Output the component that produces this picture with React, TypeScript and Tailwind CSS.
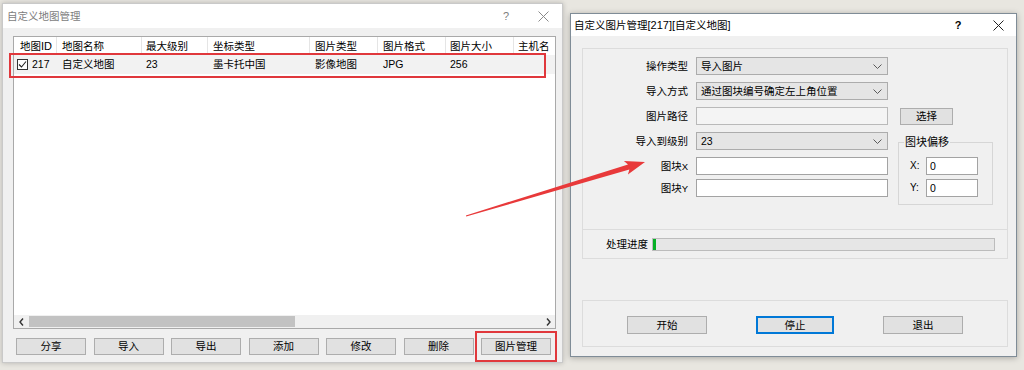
import React from "react";

function CloseX({ color }: { color: string }) {
  return (
    <svg width="11" height="11" viewBox="0 0 11 11">
      <line x1="0.5" y1="0.5" x2="10.5" y2="10.5" stroke={color} strokeWidth="1" />
      <line x1="10.5" y1="0.5" x2="0.5" y2="10.5" stroke={color} strokeWidth="1" />
    </svg>
  );
}

function Chevron() {
  return (
    <svg width="9" height="5" viewBox="0 0 9 5">
      <polyline points="0.5,0.5 4.5,4.5 8.5,0.5" fill="none" stroke="#5a5a5a" strokeWidth="1" />
    </svg>
  );
}

function Combo({ value }: { value: string }) {
  return (
    <div className="ml-[8px] w-[192px] h-[18px] bg-[#e5e5e5] border border-[#acacac] flex items-center pl-[4px] pr-[5px]">
      <span className="flex-1">{value}</span>
      <Chevron />
    </div>
  );
}

function Btn({ children, w, blue }: { children: React.ReactNode; w: string; blue?: boolean }) {
  return (
    <div
      className={`${w} h-[18px] bg-[#e1e1e1] border flex items-center justify-center ${
        blue ? "border-[#0078d7] shadow-[inset_0_0_0_1px_#0078d7]" : "border-[#adadad]"
      }`}
    >
      {children}
    </div>
  );
}

const cols = [
  { w: "w-[43px]", h: "地图ID", d: "217", pl: "pl-[6px]" },
  { w: "w-[85px]", h: "地图名称", d: "自定义地图", pl: "pl-[5px]" },
  { w: "w-[66px]", h: "最大级别", d: "23", pl: "pl-[4px]" },
  { w: "w-[102px]", h: "坐标类型", d: "墨卡托中国", pl: "pl-[5px]" },
  { w: "w-[68px]", h: "图片类型", d: "影像地图", pl: "pl-[5px]" },
  { w: "w-[68px]", h: "图片格式", d: "JPG", pl: "pl-[5px]" },
  { w: "w-[68px]", h: "图片大小", d: "256", pl: "pl-[4px]" },
  { w: "w-[60px]", h: "主机名", d: "", pl: "pl-[4px]" },
];

function LeftDialog() {
  return (
    <div className="ml-[2px] mt-[3px] w-[561px] h-[360px] shrink-0 flex flex-col bg-[#f0f0f0] border border-[#c9c9c9] shadow-[0_0_5px_rgba(0,0,0,0.22)]">
      <div className="h-[24px] bg-white flex items-center pl-[4px] text-[#7d7d7d]">
        <span className="text-[10.5px]">自定义地图管理</span>
        <span className="ml-auto w-[20px] text-center text-[11px] font-['Liberation_Sans',sans-serif]">?</span>
        <span className="ml-[17px] mr-[9px] w-[20px] flex justify-center">
          <CloseX color="#8a8a8a" />
        </span>
      </div>
      <div className="mt-[8px] ml-[10px] w-[543px] h-[293px] bg-white border border-[#a9a9a9] flex flex-col overflow-hidden">
        <div className="h-[18px] flex shrink-0">
          {cols.map((c, i) => (
            <div
              key={i}
              className={`${c.w} ${c.pl} shrink-0 flex items-center border-r border-[#e5e5e5] whitespace-nowrap`}
            >
              {c.h === "地图ID" ? (
                <span>
                  地图<span className="font-['Liberation_Sans',sans-serif] text-[11px]">ID</span>
                </span>
              ) : (
                c.h
              )}
            </div>
          ))}
        </div>
        <div className="h-[19px] flex shrink-0 bg-[#f2f2f2]">
          {cols.map((c, i) => (
            <div key={i} className={`${c.w} shrink-0 flex items-center whitespace-nowrap ${i === 0 ? "pl-[3px]" : c.pl}`}>
              {i === 0 ? (
                <>
                  <span className="w-[11px] h-[11px] border border-[#333] bg-white flex items-center justify-center">
                    <svg width="9" height="9" viewBox="0 0 9 9">
                      <polyline points="1,4.5 3.5,7 8,1.5" fill="none" stroke="#222" strokeWidth="1.1" />
                    </svg>
                  </span>
                  <span className="ml-[4px] font-['Liberation_Sans',sans-serif] text-[10.5px]">217</span>
                </>
              ) : /[A-Za-z0-9]/.test(c.d) ? (
                <span className="font-['Liberation_Sans',sans-serif] text-[10.5px]">{c.d}</span>
              ) : (
                c.d
              )}
            </div>
          ))}
        </div>
        <div className="flex-1" />
        <div className="h-[13px] shrink-0 flex items-center bg-[#f0f0f0]">
          <span className="w-[14px] flex justify-center">
            <svg width="5" height="8" viewBox="0 0 5 8">
              <polyline points="4,0.5 1,4 4,7.5" fill="none" stroke="#333" strokeWidth="1.4" />
            </svg>
          </span>
          <span className="ml-[1px] w-[266px] h-[11px] bg-[#c2c2c2]" />
          <span className="flex-1" />
          <span className="w-[14px] flex justify-center">
            <svg width="5" height="8" viewBox="0 0 5 8">
              <polyline points="1,0.5 4,4 1,7.5" fill="none" stroke="#333" strokeWidth="1.4" />
            </svg>
          </span>
        </div>
      </div>
      <div className="mt-[9px] ml-[13px] flex gap-[7.5px]">
        {["分享", "导入", "导出", "添加", "修改", "删除", "图片管理"].map((t) => (
          <div key={t} className="w-[70px] h-[17px] bg-[#e1e1e1] border border-[#adadad] flex items-center justify-center">
            {t}
          </div>
        ))}
      </div>
    </div>
  );
}

function Row({ label, children, mt }: { label: React.ReactNode; children: React.ReactNode; mt: string }) {
  return (
    <div className={`h-[18px] flex items-center ${mt}`}>
      <div className="w-[105px] text-right whitespace-nowrap">{label}</div>
      {children}
    </div>
  );
}

function RightDialog() {
  return (
    <div className="ml-[7px] mt-[13px] w-[447px] h-[344px] shrink-0 flex flex-col bg-[#f0f0f0] border border-[#7f8c97] shadow-[0_1px_6px_rgba(0,0,0,0.28)]">
      <div className="h-[22px] bg-white flex items-center pl-[3px]">
        <span>
          自定义图片管理<span className="font-['Liberation_Sans',sans-serif] text-[11px]">[217][</span>自定义地图
          <span className="font-['Liberation_Sans',sans-serif] text-[11px]">]</span>
        </span>
        <span className="ml-auto w-[20px] text-center text-[11px] font-['Liberation_Sans',sans-serif] font-bold">?</span>
        <span className="ml-[20px] mr-[8px] w-[20px] flex justify-center">
          <CloseX color="#222" />
        </span>
      </div>
      <div className="mt-[12px] ml-[11px] w-[426px] border border-[#dcdcdc] flex flex-col">
        <div className="h-[180px] flex">
          <div className="flex flex-col pt-[8px]">
            <Row label="操作类型" mt="">
              <Combo value="导入图片" />
            </Row>
            <Row label="导入方式" mt="mt-[7px]">
              <Combo value="通过图块编号确定左上角位置" />
            </Row>
            <Row label="图片路径" mt="mt-[7px]">
              <div className="ml-[8px] w-[192px] h-[18px] bg-[#f4f4f4] border border-[#b9b9b9]" />
            </Row>
            <Row label="导入到级别" mt="mt-[7px]">
              <div className="ml-[8px] w-[192px] h-[18px] bg-[#e5e5e5] border border-[#acacac] flex items-center pl-[4px] pr-[5px]">
                <span className="flex-1 font-['Liberation_Sans',sans-serif] text-[10.5px]">23</span>
                <Chevron />
              </div>
            </Row>
            <Row
              label={
                <span>
                  图块<span className="font-['Liberation_Sans',sans-serif] text-[9.5px]">X</span>
                </span>
              }
              mt="mt-[7px]"
            >
              <div className="ml-[8px] w-[192px] h-[18px] bg-white border border-[#a3a3a3]" />
            </Row>
            <Row
              label={
                <span>
                  图块<span className="font-['Liberation_Sans',sans-serif] text-[9.5px]">Y</span>
                </span>
              }
              mt="mt-[4px]"
            >
              <div className="ml-[8px] w-[192px] h-[18px] bg-white border border-[#a3a3a3]" />
            </Row>
          </div>
          <div className="ml-[10px] flex flex-col">
            <div className="mt-[59px] ml-[2px] w-[53px] h-[17px] bg-[#e1e1e1] border border-[#adadad] flex items-center justify-center">
              选择
            </div>
            <div className="relative mt-[17px] w-[95px] h-[63px] border border-[#d6d6d6] pt-[14px]">
              <span className="absolute left-[5px] top-[-7px] bg-[#f0f0f0] px-[1px] text-[11px]">图块偏移</span>
              <div className="h-[18px] flex items-center pl-[11px]">
                <span className="w-[16px] font-['Liberation_Sans',sans-serif] text-[10px]">X:</span>
                <div className="w-[52px] h-[18px] bg-white border border-[#a3a3a3] flex items-center pl-[3px] font-['Liberation_Sans',sans-serif] text-[10.5px]">
                  0
                </div>
              </div>
              <div className="mt-[4px] h-[18px] flex items-center pl-[11px]">
                <span className="w-[16px] font-['Liberation_Sans',sans-serif] text-[10px]">Y:</span>
                <div className="w-[52px] h-[18px] bg-white border border-[#a3a3a3] flex items-center pl-[3px] font-['Liberation_Sans',sans-serif] text-[10.5px]">
                  0
                </div>
              </div>
            </div>
          </div>
        </div>
        <div className="h-[29px] border-t border-[#dcdcdc] flex items-center pl-[23px]">
          <span className="w-[46px] whitespace-nowrap">处理进度</span>
          <div className="w-[343px] h-[13px] bg-[#e6e6e6] border border-[#bcbcbc] flex">
            <div className="w-[3px] h-full bg-[#06b025]" />
          </div>
        </div>
      </div>
      <div className="mt-[41px] ml-[11px] w-[426px] h-[47px] border border-[#dcdcdc] pt-[15px] pl-[44px] flex gap-[49px]">
        <Btn w="w-[80px]">开始</Btn>
        <Btn w="w-[78px]" blue>
          停止
        </Btn>
        <Btn w="w-[80px]">退出</Btn>
      </div>
    </div>
  );
}

export default function App() {
  return (
    <div className="relative w-[1024px] h-[370px] overflow-hidden bg-[#e8e6e0] flex items-start text-black text-[10.5px] leading-none font-['Noto_Sans_CJK_SC','Liberation_Sans',sans-serif]">
      <LeftDialog />
      <RightDialog />
      <div className="absolute left-[9px] top-[53px] w-[537px] h-[25px] border-2 border-[#e0383c]" />
      <div className="absolute left-[475px] top-[331px] w-[82px] h-[31px] border-2 border-[#e0383c]" />
      <svg className="absolute left-0 top-0" width="1024" height="370" viewBox="0 0 1024 370">
        <polygon
          points="465.9,215.4 628.0,164.4 623.9,160.9 645,162 627.9,174.6 629.4,169.4 466.2,216.6"
          fill="#e8393a"
        />
      </svg>
    </div>
  );
}
